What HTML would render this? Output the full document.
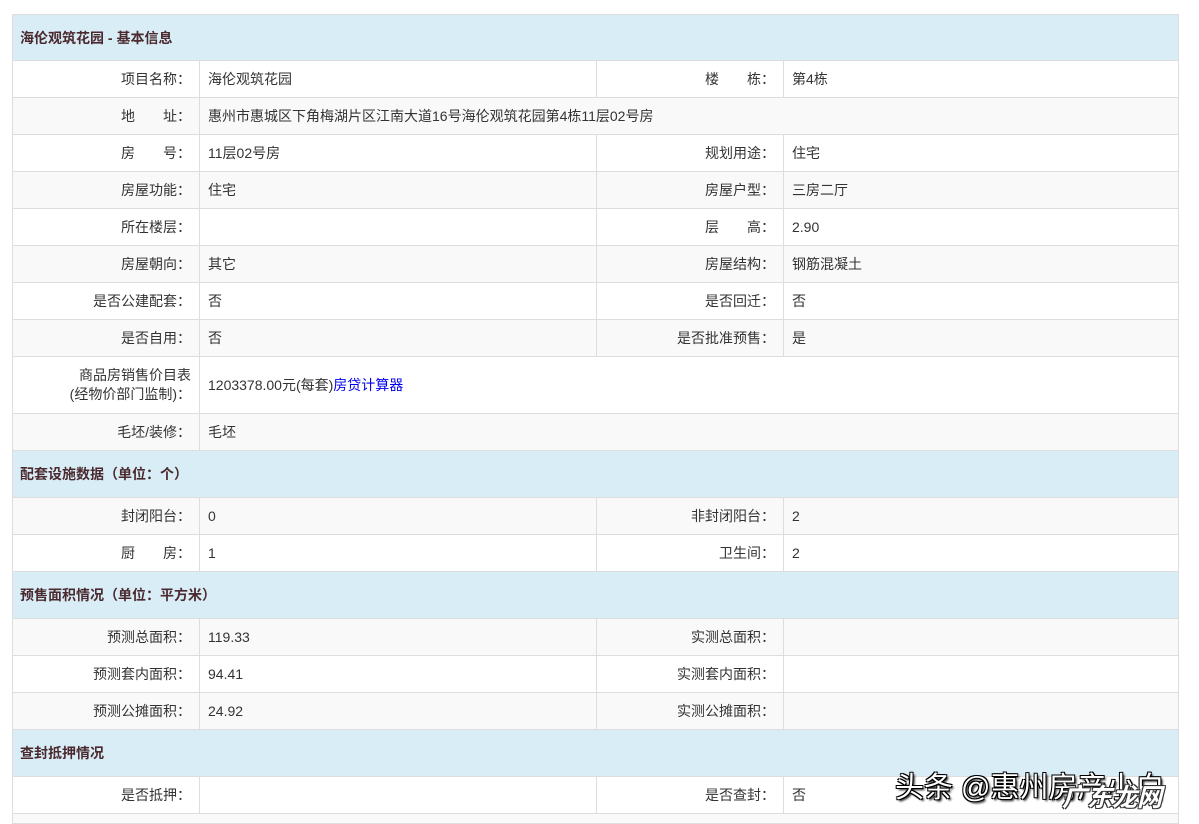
<!DOCTYPE html>
<html><head><meta charset="utf-8"><style>
body{margin:0;background:#fff;width:1199px;height:821px;overflow:hidden;position:relative;font-family:"Liberation Sans","Noto Sans CJK SC",sans-serif;font-size:14px;color:#333}
table{position:absolute;left:12px;top:14px;border-collapse:collapse;table-layout:fixed;width:1166px}
td{border:1px solid #ddd;height:37px;padding:0;box-sizing:border-box;white-space:nowrap}
td.l{text-align:right;padding-right:8px}
td.v{padding-left:8px}
tr.g td{background:#f9f9f9}
tr.h td{background:#d9edf7;height:47px;font-weight:bold;color:#4a2a2e;padding-left:7px;font-size:14px}
tr.h.f td{height:46px}
a{color:#00e;text-decoration:none}
.wm{position:absolute;left:895px;top:764px;font-size:29px;color:#fff;text-shadow:-1px -1px 0 #000,1px -1px 0 #000,-1px 1px 0 #000,1px 1px 0 #000,2px 2px 2px #000}
.wm2{position:absolute;left:1062px;top:778px;font-size:25px;color:#fff;font-style:italic;font-weight:bold;text-shadow:-1px -1px 0 #333,1px -1px 0 #333,-1px 1px 0 #333,1px 1px 0 #333}
</style></head><body>
<table>
<colgroup><col style="width:187px"><col style="width:397px"><col style="width:187px"><col style="width:395px"></colgroup>
<tr class="h f"><td colspan="4">海伦观筑花园 - 基本信息</td></tr>
<tr><td class="l">项目名称：</td><td class="v">海伦观筑花园</td><td class="l">楼　　栋：</td><td class="v">第4栋</td></tr>
<tr class="g"><td class="l">地　　址：</td><td class="v" colspan="3">惠州市惠城区下角梅湖片区江南大道16号海伦观筑花园第4栋11层02号房</td></tr>
<tr><td class="l">房　　号：</td><td class="v">11层02号房</td><td class="l">规划用途：</td><td class="v">住宅</td></tr>
<tr class="g"><td class="l">房屋功能：</td><td class="v">住宅</td><td class="l">房屋户型：</td><td class="v">三房二厅</td></tr>
<tr><td class="l">所在楼层：</td><td class="v"></td><td class="l">层　　高：</td><td class="v">2.90</td></tr>
<tr class="g"><td class="l">房屋朝向：</td><td class="v">其它</td><td class="l">房屋结构：</td><td class="v">钢筋混凝土</td></tr>
<tr><td class="l">是否公建配套：</td><td class="v">否</td><td class="l">是否回迁：</td><td class="v">否</td></tr>
<tr class="g"><td class="l">是否自用：</td><td class="v">否</td><td class="l">是否批准预售：</td><td class="v">是</td></tr>
<tr><td class="l" style="height:57px;line-height:19px">商品房销售价目表<br>(经物价部门监制)：</td><td class="v" colspan="3">1203378.00元(每套)<a>房贷计算器</a></td></tr>
<tr class="g"><td class="l">毛坯/装修：</td><td class="v" colspan="3">毛坯</td></tr>
<tr class="h"><td colspan="4">配套设施数据（单位：个）</td></tr>
<tr class="g"><td class="l">封闭阳台：</td><td class="v">0</td><td class="l">非封闭阳台：</td><td class="v">2</td></tr>
<tr><td class="l">厨　　房：</td><td class="v">1</td><td class="l">卫生间：</td><td class="v">2</td></tr>
<tr class="h"><td colspan="4">预售面积情况（单位：平方米）</td></tr>
<tr class="g"><td class="l">预测总面积：</td><td class="v">119.33</td><td class="l">实测总面积：</td><td class="v"></td></tr>
<tr><td class="l">预测套内面积：</td><td class="v">94.41</td><td class="l">实测套内面积：</td><td class="v"></td></tr>
<tr class="g"><td class="l">预测公摊面积：</td><td class="v">24.92</td><td class="l">实测公摊面积：</td><td class="v"></td></tr>
<tr class="h"><td colspan="4">查封抵押情况</td></tr>
<tr><td class="l">是否抵押：</td><td class="v"></td><td class="l">是否查封：</td><td class="v">否</td></tr>
<tr class="g"><td colspan="4" style="height:10px"></td></tr>
</table>
<div class="wm">头条 @惠州房产小白</div>
<div class="wm2">广东龙网</div>
</body></html>
